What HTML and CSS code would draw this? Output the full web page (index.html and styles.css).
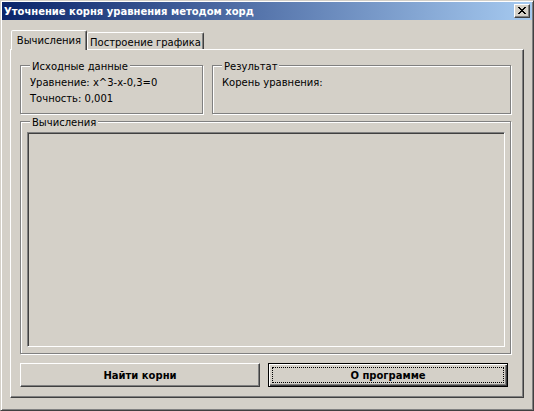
FILE: index.html
```html
<!DOCTYPE html>
<html lang="ru">
<head>
    <meta charset="UTF-8">
    <title>Уточнение корня уравнения методом хорд</title>
    <link rel="stylesheet" href="styles.css">
</head>
<body>
    <div class="window">
        <div class="titlebar">
            <span class="title">Уточнение корня уравнения методом хорд</span>
            <button class="close-btn" type="button">
                <!-- classic 8x7 close cross -->
                <svg width="8" height="7" viewBox="0 0 8 7" shape-rendering="crispEdges">
                    <path fill="#000" d="M0 0h2v1H0zM6 0h2v1H6zM1 1h2v1H1zM5 1h2v1H5zM2 2h4v1H2zM3 3h2v1H3zM2 4h4v1H2zM1 5h2v1H1zM5 5h2v1H5zM0 6h2v1H0zM6 6h2v1H6z"/>
                </svg>
            </button>
        </div>

        <div class="client">
            <div class="tabs">
                <div class="tab tab-calc active">Вычисления</div>
                <div class="tab tab-plot">Построение графика</div>
            </div>

            <div class="tab-page">
                <div class="row">
                    <div class="group source">
                        <span class="caption">Исходные данные</span>
                        <div class="line">Уравнение: x^3-x-0,3=0</div>
                        <div class="line">Точность: 0,001</div>
                    </div>
                    <div class="group result">
                        <span class="caption">Результат</span>
                        <div class="line">Корень уравнения:</div>
                    </div>
                </div>

                <div class="group calc">
                    <span class="caption">Вычисления</span>
                    <div class="memo"></div>
                </div>

                <div class="buttons">
                    <button class="btn" type="button">Найти корни</button>
                    <button class="btn default" type="button"><span class="focus">О программе</span></button>
                </div>
            </div>
        </div>
    </div>
</body>
</html>
```

FILE: styles.css
```css
* {
    box-sizing: border-box;
}

body {
    margin: 0;
    background: #d4d0c8;
    font-family: 'DejaVu Sans', 'Liberation Sans', sans-serif;
    font-size: 10px;
    color: #000;
}

/* window frame: light/white outer edge, gray/dark shadow edge */
.window {
    width: 534px;
    height: 411px;
    padding: 1px;
    display: flex;
    flex-direction: column;
    background: #d4d0c8;
    border: 1px solid;
    border-color: #d4d0c8 #404040 #404040 #d4d0c8;
    box-shadow: inset 1px 1px 0 #fff, inset -1px -1px 0 #808080;
}

.titlebar {
    height: 18px;
    display: flex;
    align-items: center;
    padding-left: 2px;
    background: linear-gradient(to right, #0a246a, #a6caf0);
}

.title {
    color: #fff;
    font-weight: bold;
    line-height: 18px;
    padding-top: 1px;
}

.close-btn {
    width: 16px;
    height: 14px;
    margin-left: auto;
    margin-right: 2px;
    padding: 0 0 1px 0;
    display: flex;
    align-items: center;
    justify-content: center;
    background: #d4d0c8;
    border: 1px solid;
    border-color: #fff #404040 #404040 #fff;
    box-shadow: inset -1px -1px 0 #808080;
}

.client {
    flex: 1;
    display: flex;
    flex-direction: column;
    padding: 10px 8px 9px;
}

/* tab strip */
.tabs {
    height: 19px;
    display: flex;
    align-items: flex-end;
    padding-left: 1px;
}

.tab {
    height: 17px;
    padding-top: 3px;
    line-height: 13px;
    text-align: center;
    white-space: nowrap;
    background: #d4d0c8;
    border: 1px solid;
    border-bottom: 0;
    border-color: #fff #404040 transparent #fff;
    border-radius: 2px 2px 0 0;
    box-shadow: inset -1px 0 0 #808080;
}

.tab.active {
    height: 20px;
    margin-bottom: -1px;
    position: relative;
    z-index: 1;
}

.tab-calc {
    width: 76px;
}

.tab-plot {
    width: 117px;
}

.tab-page {
    height: 349px;
    padding: 15px 12px 0 9px;
    border: 1px solid;
    border-color: #fff #404040 #404040 #fff;
    box-shadow: inset -1px -1px 0 #808080;
}

.row {
    display: flex;
    gap: 9px;
}

/* etched group box */
.group {
    position: relative;
    border: 1px solid #808080;
    box-shadow: inset 1px 1px 0 #fff, 1px 1px 0 #fff;
    padding: 9px 9px 0;
}

.caption {
    position: absolute;
    top: -6px;
    left: 9px;
    padding: 0 2px;
    line-height: 13px;
    background: #d4d0c8;
}

.line {
    line-height: 16px;
}

.source {
    width: 183px;
    height: 49px;
}

.result {
    flex: 1;
    height: 49px;
}

.calc {
    height: 233px;
    margin-top: 7px;
    padding: 10px 5px 6px 6px;
    display: flex;
}

/* sunken read-only memo */
.memo {
    flex: 1;
    background: #d4d0c8;
    border: 1px solid;
    border-color: #808080 #fff #fff #808080;
    box-shadow: inset 1px 1px 0 #404040, inset -1px -1px 0 #d4d0c8;
}

.buttons {
    display: flex;
    gap: 8px;
    margin-top: 9px;
}

.btn {
    width: 240px;
    height: 24px;
    padding: 0;
    font-family: inherit;
    font-size: 10px;
    font-weight: bold;
    color: #000;
    background: #d4d0c8;
    border: 1px solid;
    border-color: #fff #404040 #404040 #fff;
    box-shadow: inset -1px -1px 0 #808080;
}

.btn.default {
    padding: 3px;
    border: 1px solid #000;
    box-shadow: inset 1px 1px 0 #fff, inset -1px -1px 0 #404040, inset -2px -2px 0 #808080;
}

.focus {
    display: flex;
    align-items: center;
    justify-content: center;
    height: 100%;
    border: 1px dotted #000;
}
```
